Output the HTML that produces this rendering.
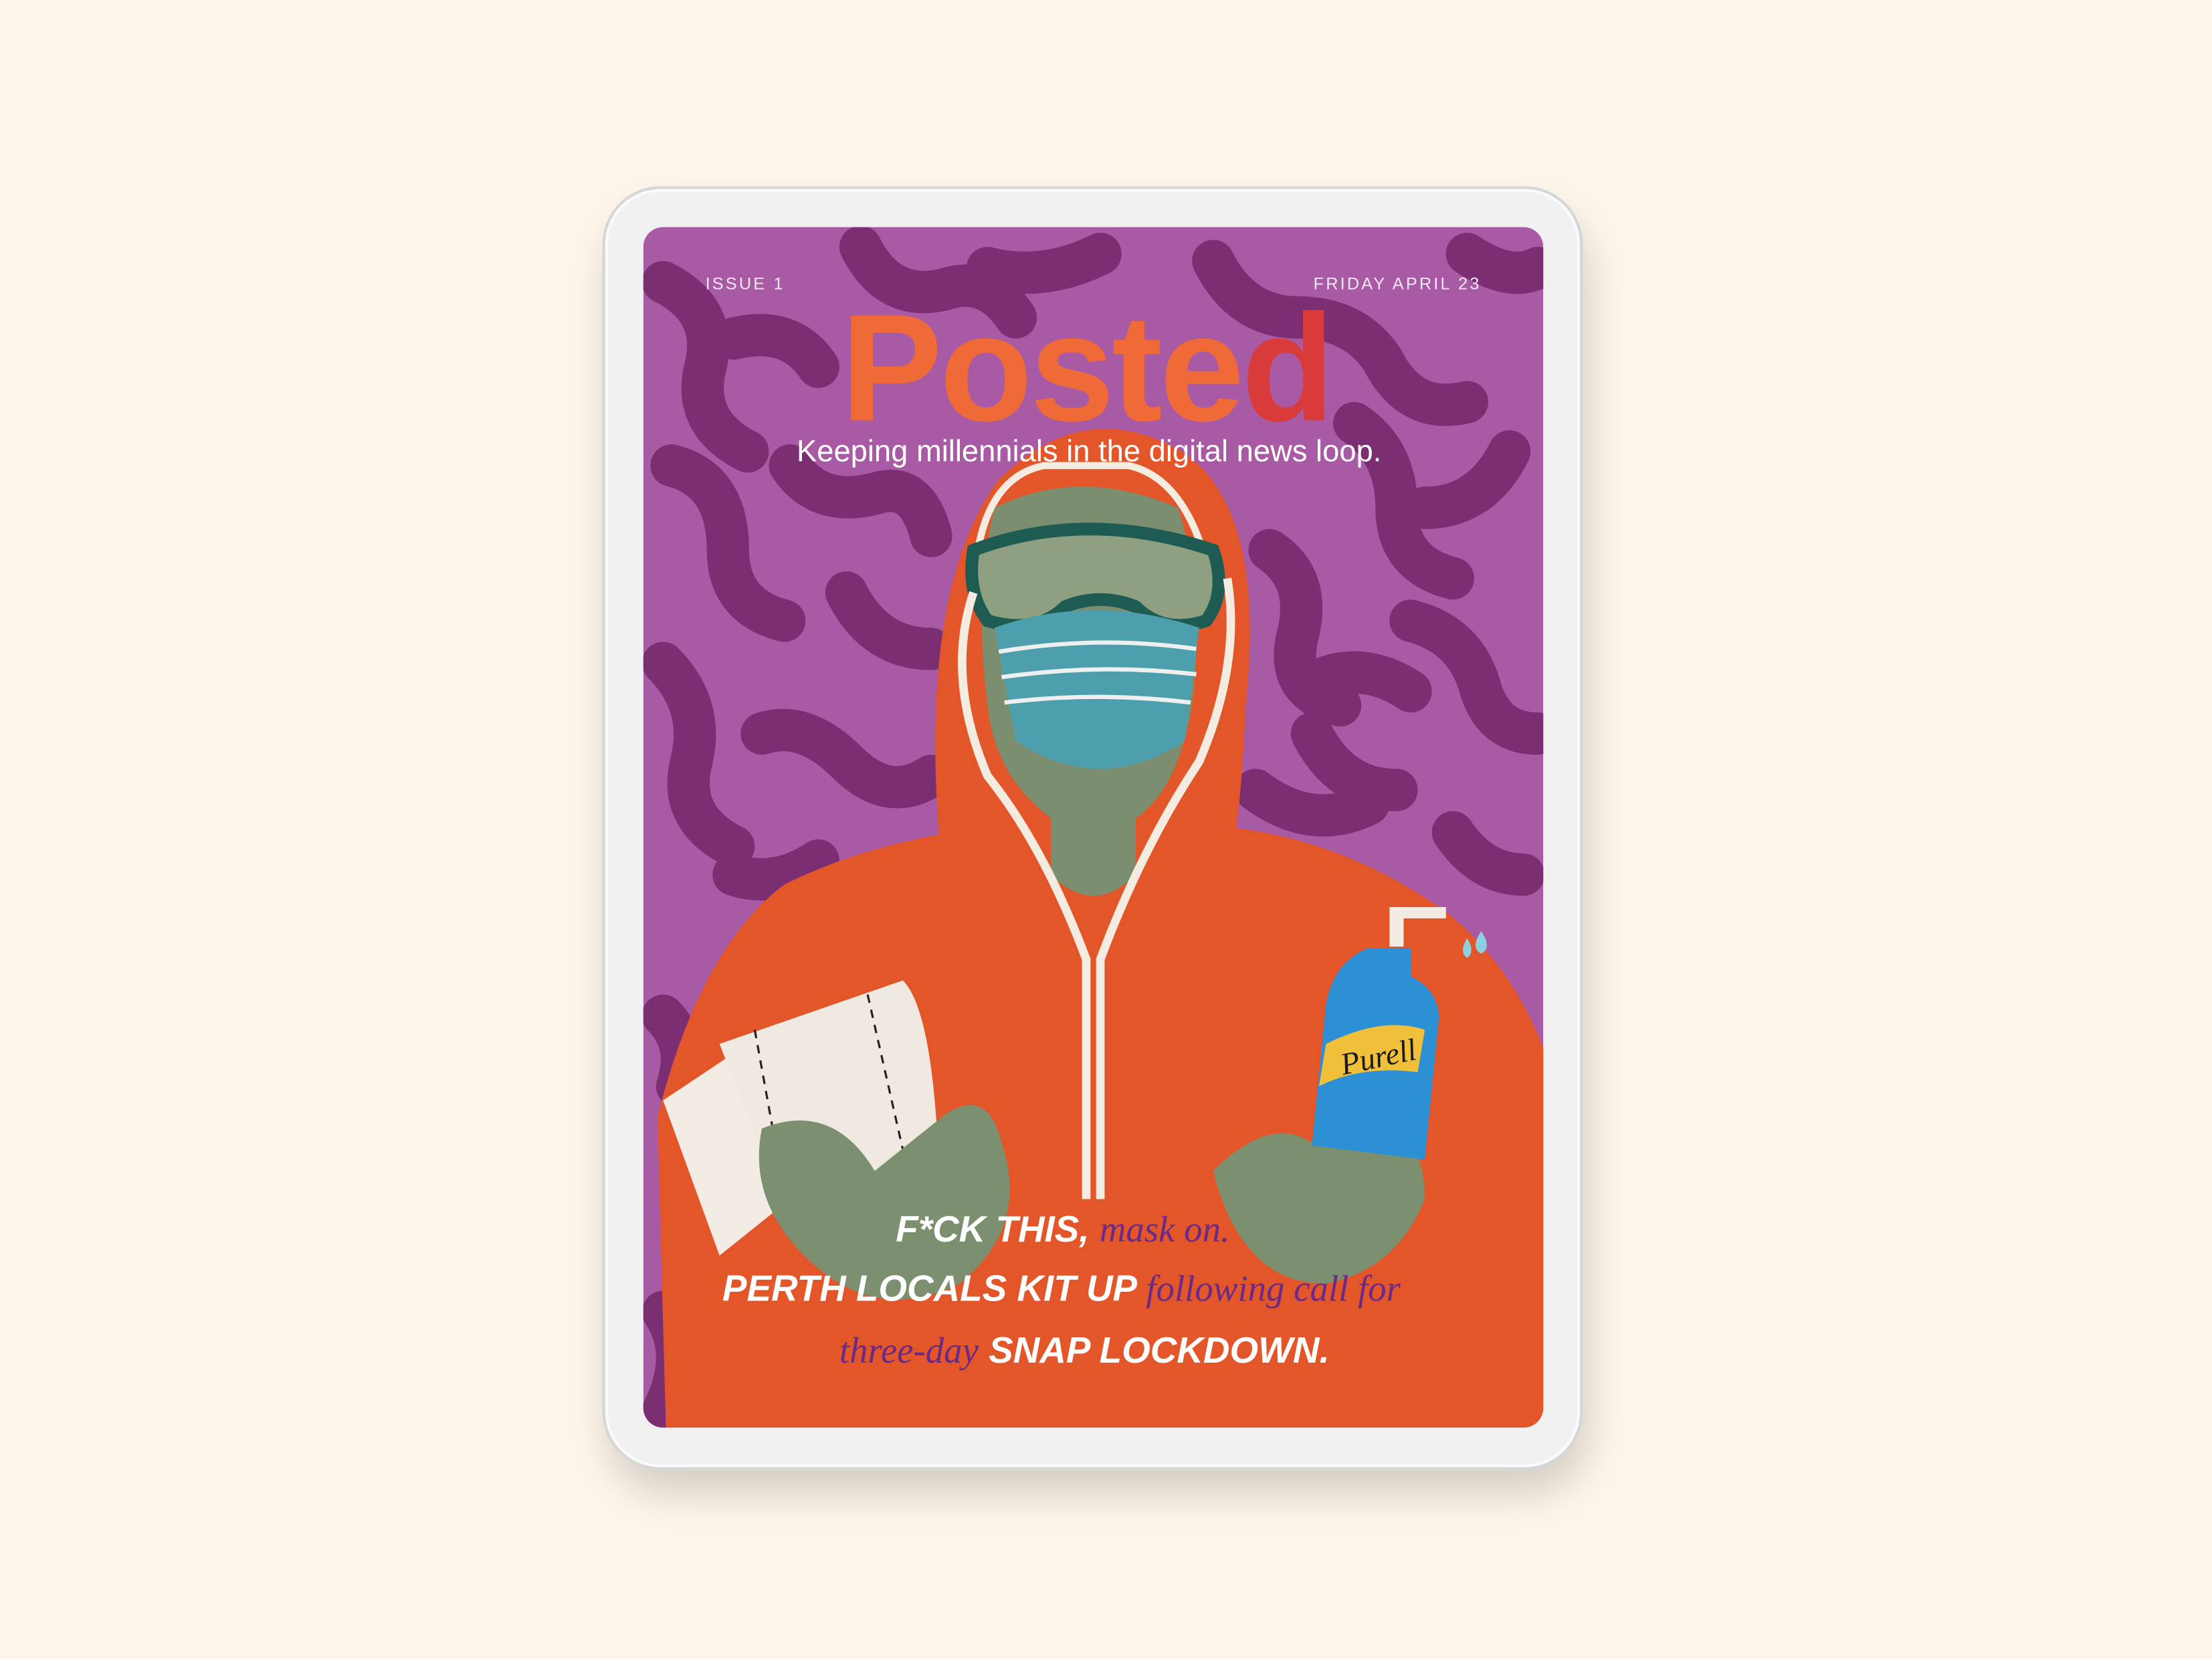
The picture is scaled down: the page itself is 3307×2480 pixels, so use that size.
<!DOCTYPE html>
<html><head><meta charset="utf-8"><style>
html,body{margin:0;padding:0;background:#fdf5ea;}
svg{display:block;}
</style></head><body>
<svg width="3307" height="2480" viewBox="0 0 1568 1176" xmlns="http://www.w3.org/2000/svg">
<defs>
<filter id="sh" x="-20%" y="-20%" width="140%" height="140%"><feGaussianBlur stdDeviation="14"/></filter>
<clipPath id="scr"><rect x="456" y="161" width="638" height="851" rx="14"/></clipPath>
</defs>
<rect width="1568" height="1176" fill="#fdf5ea"/>
<rect x="432" y="150" width="693" height="908" rx="42" fill="#000" opacity="0.16" filter="url(#sh)"/>
<rect x="428" y="133" width="693" height="908" rx="40" fill="#f1f1f1" stroke="#d6d6d6" stroke-width="2"/>
<rect x="430" y="135" width="689" height="904" rx="38" fill="none" stroke="#fafafa" stroke-width="2"/>
<g clip-path="url(#scr)">
<rect x="456" y="161" width="638" height="851" fill="#a85ba4"/>
<g fill="none" stroke="#7b2e72" stroke-width="30" stroke-linecap="round">
<path d="M470 200 q40 20 30 60 q-10 40 30 60"/>
<path d="M520 240 q40 -10 60 20"/>
<path d="M610 175 q20 40 60 30 q30 -10 50 20"/>
<path d="M700 190 q40 10 80 -10"/>
<path d="M860 185 q20 40 60 40 q40 0 60 30 q20 40 60 30"/>
<path d="M1040 180 q30 20 50 10"/>
<path d="M960 300 q30 20 30 60 q0 40 40 50"/>
<path d="M1070 320 q-20 40 -60 40"/>
<path d="M476 330 q40 10 40 60 q0 40 40 50"/>
<path d="M560 330 q20 30 60 20 q30 -10 40 30"/>
<path d="M600 420 q20 40 60 40"/>
<path d="M470 470 q30 30 20 70 q-10 40 30 60"/>
<path d="M540 520 q30 -10 60 20 q30 30 60 10"/>
<path d="M520 620 q30 10 60 -10"/>
<path d="M900 390 q30 20 20 60 q-10 40 30 50"/>
<path d="M1000 440 q40 10 50 50 q10 30 40 30"/>
<path d="M930 520 q20 40 60 40"/>
<path d="M890 560 q40 30 80 10"/>
<path d="M1030 590 q20 30 50 30"/>
<path d="M940 480 q30 -10 60 10"/>
<path d="M470 720 q20 20 10 50"/>
<path d="M470 930 q20 30 0 70"/>
</g>
<!-- body -->
<path d="M472 1012 l-6 -220 q30 -120 90 -165 q60 -30 140 -40 l180 0 q80 10 150 60 q60 50 78 130 l0 235z" fill="#e3562a"/>
<!-- hood -->
<path d="M668 620 q-20 -200 40 -280 q60 -60 130 -20 q60 40 45 180 q-5 120 -20 130 z" fill="#e3562a"/>
<path d="M690 430 q0 -90 50 -100 l60 0 q45 10 60 90" fill="none" stroke="#f4ece0" stroke-width="5"/>
<!-- face -->
<path d="M705 360 q60 -30 130 0 q20 60 10 140 q-10 60 -40 80 l0 40 q-30 30 -60 0 l0 -40 q-40 -30 -45 -80 q-10 -80 5 -140z" fill="#7b8e6f"/>
<!-- goggles -->
<path d="M690 390 q80 -30 170 0 q10 30 -5 50 q-30 10 -50 -10 q-25 -10 -50 0 q-20 20 -55 10 q-15 -20 -10 -50z" fill="#8fa081" stroke="#1e5b53" stroke-width="9"/>
<!-- mask -->
<path d="M705 445 q70 -25 145 0 l-10 80 q-60 40 -120 0z" fill="#4d9fae"/>
<g stroke="#eef0f0" stroke-width="3" fill="none"><path d="M708 462 q70 -12 140 -2"/><path d="M710 480 q70 -10 138 -2"/><path d="M712 498 q65 -8 132 0"/></g>
<!-- zip -->
<path d="M690 420 q-20 60 10 130 q40 50 70 130 l0 170" fill="none" stroke="#f4ece0" stroke-width="6"/>
<path d="M870 410 q10 60 -20 130 q-40 60 -70 140 l0 170" fill="none" stroke="#f4ece0" stroke-width="6"/>
<!-- toilet roll -->
<path d="M470 780 l60 -40 l30 110 l-50 40z" fill="#f2ece4"/>
<path d="M510 740 l130 -45 q20 20 25 120 l-110 40z" fill="#efe9e1"/>
<path d="M535 730 l20 110 M615 705 l25 110" stroke="#222" stroke-width="1.5" stroke-dasharray="6 5"/>
<!-- hands -->
<path d="M540 800 q50 -20 80 30 l50 -40 q30 -20 40 20 q20 60 -30 100 q-60 30 -110 -20 q-40 -40 -30 -90z" fill="#7c9070"/>
<path d="M860 830 q40 -40 70 -20 l40 -20 q40 10 40 60 q-20 50 -70 60 q-60 0 -80 -80z" fill="#7c9070"/>
<!-- bottle -->
<rect x="985" y="643" width="10" height="28" fill="#f2ece4"/><rect x="985" y="643" width="40" height="8" fill="#f2ece4"/>
<path d="M970 672 l30 0 l0 20 q20 10 20 30 l-10 100 l-80 -10 l10 -100 q5 -30 30 -40z" fill="#2d8fd4"/>
<path d="M940 740 q40 -20 70 -10 l-5 30 q-40 -5 -70 10z" fill="#f0c03a"/>
<text x="950" y="758" font-family="Liberation Serif,serif" font-style="italic" font-size="22" fill="#1a1a1a" transform="rotate(-12 970 750)">Purell</text>
<path d="M1040 665 q6 10 0 14 q-6 -4 0 -14z M1050 660 q8 12 0 16 q-8 -4 0 -16z" fill="#8fd0e0"/>
</g>
<!-- text -->
<g font-family="Liberation Sans,sans-serif" fill="#f3e6f1">
<text x="500" y="205" font-size="12" letter-spacing="1.5">ISSUE 1</text>
<text x="1050" y="205" font-size="12" letter-spacing="1.5" text-anchor="end">FRIDAY APRIL 23</text>
</g>
<text x="770" y="298" font-family="Liberation Sans,sans-serif" font-weight="bold" font-size="108" text-anchor="middle" fill="#ef6a36" letter-spacing="-2">Poste<tspan fill="#d93a3a">d</tspan></text>
<text x="772" y="327" font-family="Liberation Sans,sans-serif" font-size="21.5" text-anchor="middle" fill="#fff">Keeping millennials in the digital news loop.</text>
<g font-family="Liberation Sans,sans-serif" font-style="italic" font-weight="bold" font-size="26">
<text x="635" y="880" fill="#fff">F*CK THIS, <tspan fill="#6a2a86" font-family="Liberation Serif,serif" font-weight="normal">mask on.</tspan></text>
<text x="512" y="922" fill="#fff">PERTH LOCALS KIT UP <tspan fill="#6a2a86" font-family="Liberation Serif,serif" font-weight="normal">following call for</tspan></text>
<text x="595" y="966" fill="#6a2a86"><tspan font-family="Liberation Serif,serif" font-weight="normal">three-day</tspan> <tspan fill="#fff">SNAP LOCKDOWN.</tspan></text>
</g>
</svg>
</body></html>
